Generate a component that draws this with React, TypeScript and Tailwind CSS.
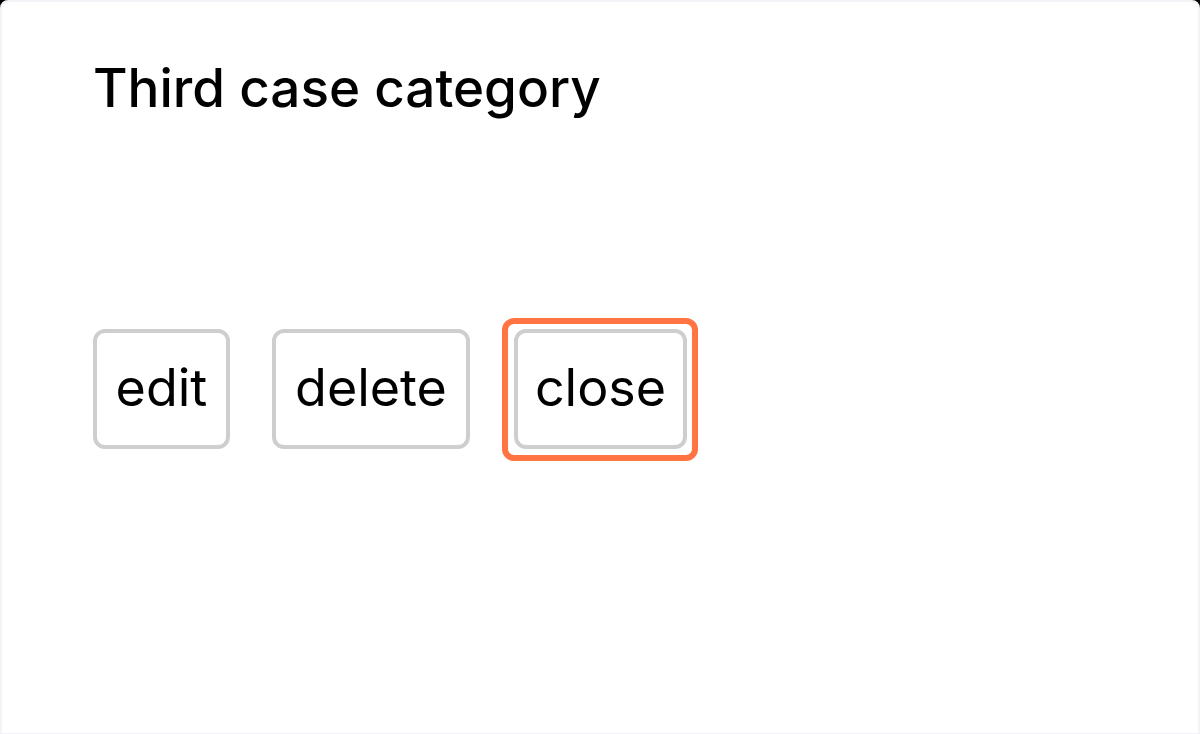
const buttonClass =
  "h-30 rounded-xl border-4 border-[#cecece] bg-white pb-0.5 text-center text-[52px] leading-[60px] font-normal text-black";

export default function App() {
  return (
    <div className="min-h-screen bg-black font-['Inter',sans-serif]">
      <main className="min-h-screen rounded-t-lg border-2 border-b border-[#f3f3f7] bg-white px-[91px] pt-[54px]">
        <h1 className="text-[53px] leading-[64px] font-medium text-black">Third case category</h1>
        <div className="mt-[209px] flex flex-wrap items-center gap-[42px]">
          <button type="button" className={buttonClass + " min-w-[137px]"}>edit</button>
          <button type="button" className={buttonClass + " min-w-[198px]"}>delete</button>
          <div className="relative ml-0.5">
            <button type="button" className={buttonClass + " min-w-[173px]"}>close</button>
            <div className="pointer-events-none absolute -top-[11px] -right-[11px] -bottom-3 -left-3 rounded-xl border-6 border-[#ff7442]" />
          </div>
        </div>
      </main>
    </div>
  );
}
